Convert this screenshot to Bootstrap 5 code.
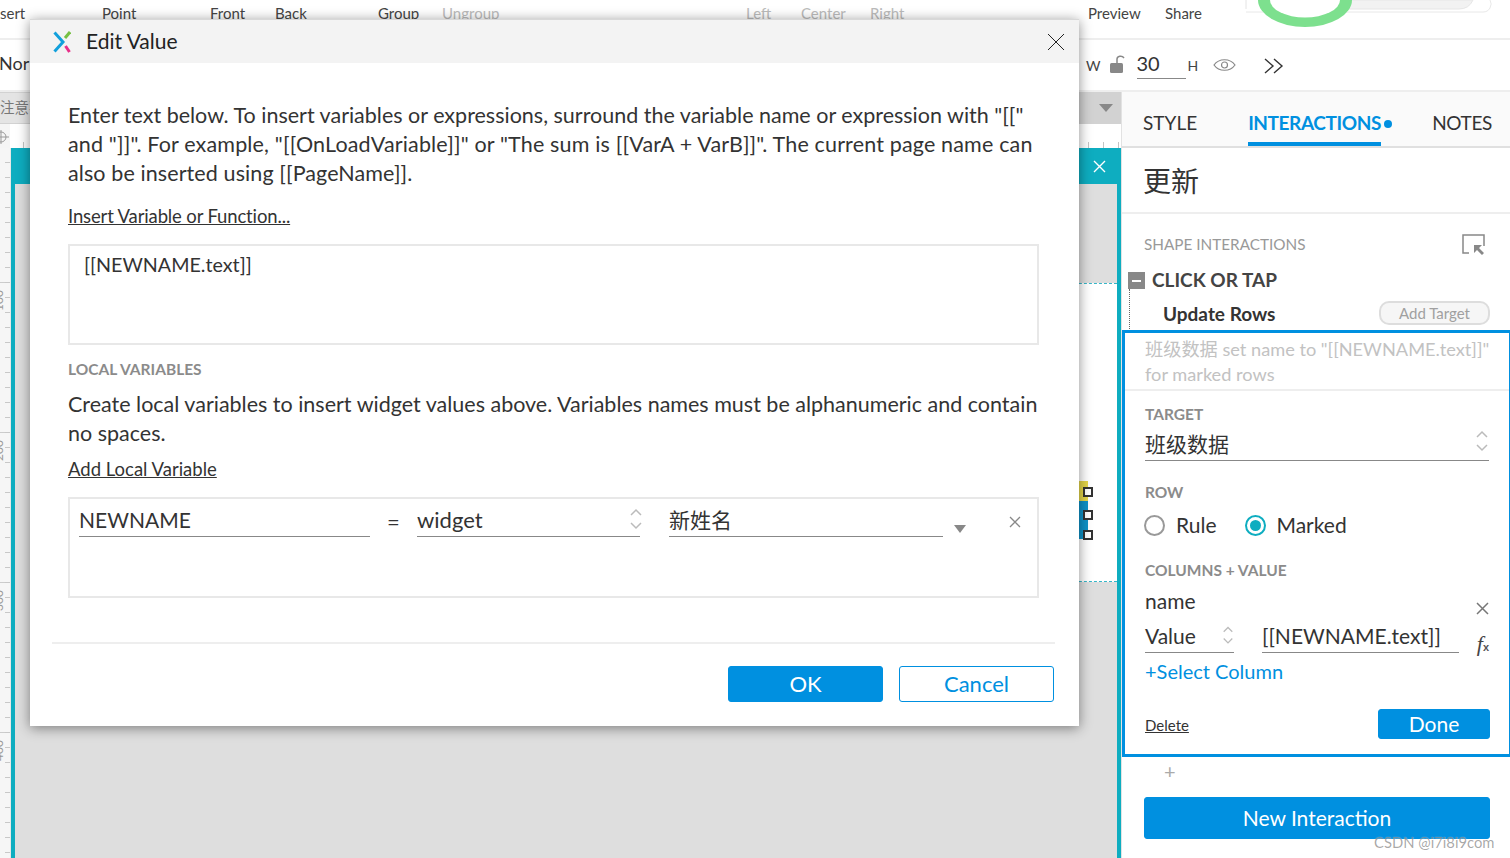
<!doctype html>
<html lang="en"><head><meta charset="utf-8"><title>Edit Value</title>
<link rel="stylesheet" href="https://cdn.jsdelivr.net/npm/bootstrap@5.3.0/dist/css/bootstrap.min.css">
<style>
:root{--ax:#0090e0;--tl:#0eadc0}
html,body{height:858px;overflow:hidden}
body{font-family:Lato,"Noto Sans CJK SC",sans-serif;color:#333;background:#fff;position:relative}
.shell{width:1510px;height:858px}
.tb-one{height:40px;border-bottom:2px solid #eee;display:grid;grid-template-columns:102px 108px 65px 103px 64px 304px 55px 69px 218px 77px 1fr;font-size:15px;line-height:27px;overflow:hidden;position:relative;color:#444}
.tb-one span{display:block}
.tb-one .dim{color:#bbb}
.ring{position:absolute;left:1245px;top:0}
.tb-two{height:52px;border-bottom:2px solid #eee;position:relative;font-size:18px}
.tb-two .norm{width:1087px;line-height:46px;margin-left:-1px}
.tb-two .lbl{font-size:14px;color:#444;margin-top:15px}
.lockic{margin:13px 0 0 8px}
.wval{width:49px;margin-left:10px;border-bottom:1px solid #888;font-size:20px;height:39px;line-height:47px}
.hval{margin-left:2px}
.eyeic{margin:18px 0 0 15px}
.chevic{margin:18px 0 0 28px}
.leftcol{width:1121px}
.rightcol{width:389px;border-left:1px solid #e2e2e2;position:relative}
.tabstrip{height:32px;background:#d2d2d2;font-size:14.5px;color:#777;position:relative}
.tabstrip .pg{background:#e4e4e4;width:30px;line-height:30px;white-space:nowrap;overflow:hidden}
.tri-b{width:0;height:0;border-left:7px solid transparent;border-right:7px solid transparent;border-top:8px solid #888;margin-right:8px}
.hruler{height:24px;background-image:repeating-linear-gradient(90deg,#c4c4c4 0 1px,transparent 1px 15px);background-size:100% 6px;background-repeat:no-repeat;background-position:8px 100%;background-color:#fff}
.hcorner{width:10px;height:24px;background:#f5f5f5}
.stage{height:710px}
.vruler{width:11px;flex:none;background-color:#f6f6f6;background-image:repeating-linear-gradient(180deg,#c8c8c8 0 1px,transparent 1px 15px),repeating-linear-gradient(180deg,#ccc 0 1px,transparent 1px 150px);background-size:5px 100%,100% 100%;background-repeat:no-repeat;background-position:100% 14px,0 134px;overflow:hidden;padding-top:134px;border-right:1px solid #e8e8e8}
.vruler div{height:150px;width:16px;font-size:12px;color:#999;writing-mode:vertical-rl;transform:translateX(-8px) rotate(180deg);line-height:14px;text-align:right;padding-bottom:8px}
.frame{width:1110px;border-left:4px solid var(--tl);border-right:4px solid var(--tl)}
.framehead{height:36px;background:var(--tl);color:#fff;padding-right:11px}
.canvasarea{height:674px;background:#dedede;padding-top:99px;position:relative}
.artboard{width:700px;height:299px;background:#fff;border-top:1px dashed #37b6c8;border-bottom:1px dashed #37b6c8;position:relative}
.hand{position:absolute;width:10px;height:10px;background:#fff;border:2px solid #333;left:calc(100% - 34px)}
.colorbar{position:absolute;left:calc(100% - 38px);width:9px}
/* right panel */
.rtabs{height:56px;background:#fafafa;border-bottom:2px solid #e0e0e0;font-size:19px;position:relative;padding-left:21px}
.rtabs span{line-height:62px;display:block}
.tab-on{color:var(--ax);font-weight:700;border-bottom:4px solid var(--ax);height:54px;margin-left:51px;letter-spacing:-.4px}
.tab-dot{width:8px;height:8px;border-radius:50%;background:var(--ax);margin:28px 0 0 3px}
.tab-note{margin-left:auto;margin-right:18px;letter-spacing:-.35px}
.rtitle{height:66px;border-bottom:2px solid #eee;font-size:28px;line-height:66px;padding-left:21px}
.capt{font-size:15.5px;color:#8b8b8b;font-weight:700;line-height:20px}
.sect-a{height:49px;padding:11px 25px 0 22px}
.sect-a .capt{color:#999;font-weight:400;font-size:15.3px}
.clickrow{height:34px;padding-left:6px;font-size:19px;font-weight:700;color:#444;line-height:32px}
.minus{width:17px;height:17px;background:#888;margin-right:7px;position:relative}
.minus::after{content:"";position:absolute;left:4px;top:8px;width:9px;height:2px;background:#fff}
.updrow{height:33px;padding:0 20px 0 41px;font-weight:700;font-size:19px;position:relative;line-height:32px}
.updrow::before{content:"";position:absolute;left:7px;top:-8px;height:40px;border-left:1px dotted #666}
.addt{width:111px;height:24px;border:2px solid #ddd;border-radius:10px;background:#f6f6f6;color:#a0a0a0;font-size:15px;font-weight:400;line-height:20px;padding:0;margin-top:-1px}
.editbox{height:427px;border:3px solid var(--ax);border-right-width:1px}
.ghost{height:58px;border-bottom:2px solid #eee;color:#c2c2c2;font-size:18.2px;line-height:25px;padding:4px 0 0 20px;white-space:nowrap}
.edpad{padding:0 20px}
.uline{border-bottom:1px solid #888}
.fs20{font-size:21px}
.rdo{width:21px;height:21px;border-radius:50%;border:2px solid #999;background:#fff;position:relative}
.rdo-on{border-color:var(--tl)}
.rdo-on::after{content:"";position:absolute;left:3px;top:3px;width:11px;height:11px;border-radius:50%;background:var(--tl)}
.rlabel{margin-left:11px}.rlabel-m{margin-left:10px}
.bluebtn{background:var(--ax);border:1px solid var(--ax);color:#fff;border-radius:3px;padding:0}
.bluebtn:hover{background:var(--ax);color:#fff}
.outbtn{background:#fff;border:1px solid var(--ax);color:var(--ax);border-radius:3px;padding:0}
.done{width:112px;height:30px;font-size:21px;line-height:26px;margin-right:-1px}
.newint{width:346px;height:42px;font-size:21px;margin:0 0 0 22px}
.plus{height:40px;padding-left:42px;color:#aaa;font-size:20px;line-height:28px}
.dlk{color:#333;font-size:15px;margin-bottom:3px}
.clr{color:var(--ax)}
.fxmark{font-family:"Liberation Serif",serif;font-style:italic;font-size:22px;color:#444;margin-top:6px;line-height:34px;white-space:nowrap}
.fxmark b{font:700 11px "Liberation Sans",sans-serif;color:#555}
.wm{position:absolute;left:252px;top:740px;font-size:14.8px;line-height:20px;color:rgba(60,60,60,.45);white-space:nowrap;text-shadow:0 0 1px rgba(255,255,255,.7)}
/* dialog */
.dlg{position:absolute;left:30px;top:19px;width:1049px;height:707px;background:#fff;box-shadow:0 2px 12px rgba(0,0,0,.45);border-top:1px solid #d8d8d8}
.dlghead{height:43px;background:#f3f3f3;font-size:21px;line-height:40px;color:#222;padding:0 14px 0 23px}
.dlghead .ttl{margin-left:15px;margin-bottom:2px}
.dlgbody{padding:38px 40px 0 38px}
.para{font-size:21.5px;line-height:29px;margin:0;white-space:nowrap;color:#333}
.ls-a{letter-spacing:.16px}.ls-b{letter-spacing:.1px}
.dlnk{font-size:18.5px;line-height:24px;color:#333;text-decoration:underline;display:block}
.dlnk-t{letter-spacing:-.14px;margin-top:16px}
.boxa{height:101px;border:2px solid #e8e8e8;padding:5px 14px;font-size:19.7px;line-height:28px;margin-top:16px}
.loc-h{margin-top:14px}.loc-p{margin-top:11px}.loc-l{margin-top:9px}
.boxb{height:101px;border:2px solid #e8e8e8;margin-top:16px;padding:9px 0 0 9px;position:relative;font-size:21px}
.fld{line-height:24px;border-bottom:1px solid #888;height:29px}
.f-a{width:291px}.f-b{width:223px;margin-left:47px;font-size:22px}.f-c{width:274px;margin-left:29px}
.f-b svg{margin-right:-3px}
.eq{width:47px;text-align:center;font-size:22px;line-height:28px;margin-right:-47px}
.tri-s{margin:17px 0 0 11px;border-left-width:6px;border-right-width:6px}
.xic{margin:7px 0 0 42px}
.sep{height:2px;background:#eee;margin:44px -16px 0 -16px}
.footbtns{margin:22px -15px 0 0}
.dbtn{width:155px;height:36px;font-size:22px;line-height:32px}
.gapa{margin-top:13px}.gapb{height:35px;line-height:36px;margin-top:2px}.gapc{margin-top:21px}.gapd{height:32px;margin-top:7px;margin-left:-1px}
.gape{margin-top:19px}.gapf{height:32px;line-height:32px;margin-top:5px}.gapg{height:32px;line-height:30px;margin-top:4px}
.gaph{font-size:20px;line-height:28px;margin-top:4px}.gapi{margin-top:24px}
.rd2{margin-left:29px}.vf{width:89px}.nf{width:197px;margin-left:28px}
.xname{margin-top:16px}
</style></head>
<body>
<div class="shell d-flex flex-column">
  <div class="tb-one">
    <span>sert</span><span>Point</span><span>Front</span><span>Back</span><span>Group</span><span class="dim">Ungroup</span><span class="dim">Left</span><span class="dim">Center</span><span class="dim">Right</span><span>Preview</span><span>Share</span>
    <svg class="ring" width="265" height="30" viewBox="0 0 265 30"><path d="M1 0V9" stroke="#e4e4e4" fill="none"/><path d="M1 12H238a8 8 0 0 0 7-12" stroke="#e8e8e8" fill="none"/><path d="M90 0H228q-4 9-14 9H90z" fill="#f2f2f2" stroke="#e6e6e6"/><path d="M13 0a47 27 0 0 0 94 0z" fill="#7de08e"/><path d="M25 0a35 17.500 0 0 0 70 0z" fill="#fff"/></svg>
  </div>
  <div class="tb-two d-flex align-items-start">
    <div class="norm">Nor</div>
    <span class="lbl">W</span>
    <svg class="lockic" width="18" height="24" viewBox="0 0 18 24"><rect x="1" y="10" width="13" height="10" rx="1.500" fill="#888"/><path d="M8 10V6c0-3 5-4 7-1" fill="none" stroke="#888" stroke-width="1.500"/></svg>
    <div class="wval">30</div>
    <span class="lbl hval">H</span>
    <svg class="eyeic" width="23" height="14" viewBox="0 0 23 14"><path d="M1 7C6 0 17 0 22 7 17 14 6 14 1 7z" fill="none" stroke="#888" stroke-width="1.200"/><circle cx="11.500" cy="7" r="3" fill="none" stroke="#888" stroke-width="1.200"/></svg>
    <svg class="chevic" width="20" height="16" viewBox="0 0 20 16"><path d="M1 1l8 7-8 7M10 1l8 7-8 7" fill="none" stroke="#333" stroke-width="1.400"/></svg>
  </div>
  <div class="d-flex flex-grow-1">
    <div class="leftcol d-flex flex-column">
      <div class="tabstrip d-flex justify-content-between align-items-center"><div class="pg">注意事项</div><div class="tri-b"></div></div>
      <div class="hruler d-flex"><div class="hcorner"><svg width="10" height="24" viewBox="0 0 10 24"><circle cx="1" cy="11" r="5" fill="none" stroke="#999"/><path d="M0 11H9M1 4V18" stroke="#999"/></svg></div></div>
      <div class="stage d-flex">
        <div class="vruler"><div>100</div><div>200</div><div>300</div><div>400</div></div>
        <div class="frame">
          <div class="framehead d-flex justify-content-end align-items-center"><svg width="13" height="13" viewBox="0 0 13 13"><path d="M1 1l11 11M12 1L1 12" stroke="#fff" stroke-width="1.400"/></svg></div>
          <div class="canvasarea d-flex justify-content-end">
            <div class="artboard">
              <i class="colorbar" style="top:197px;height:20px;background:#e5d64a"></i>
              <i class="colorbar" style="top:217px;height:38px;background:#0e92c8"></i>
              <i class="hand" style="top:203px"></i><i class="hand" style="top:226px"></i><i class="hand" style="top:246px"></i>
            </div>
          </div>
        </div>
      </div>
    </div>
    <div class="rightcol d-flex flex-column">
      <div class="rtabs d-flex"><span>STYLE</span><span class="tab-on">INTERACTIONS</span><i class="tab-dot"></i><span class="tab-note">NOTES</span></div>
      <div class="rtitle">更新</div>
      <div class="sect-a d-flex justify-content-between align-items-center"><span class="capt">SHAPE INTERACTIONS</span>
        <svg width="23" height="21" viewBox="0 0 23 21"><path d="M7 19H1V1H22V12" fill="none" stroke="#888" stroke-width="1.500"/><path d="M12 11h8l-3 3 5 5-2 2-5-5-3 3z" fill="#888"/></svg></div>
      <div class="clickrow d-flex align-items-center"><i class="minus"></i>CLICK OR TAP</div>
      <div class="updrow d-flex justify-content-between align-items-center"><span>Update Rows</span><button type="button" class="btn addt">Add Target</button></div>
      <div class="editbox">
        <div class="ghost">班级数据 set name to "[[NEWNAME.text]]"<br>for marked rows</div>
        <div class="edpad">
          <div class="capt gapa">TARGET</div>
          <div class="d-flex justify-content-between uline fs20 gapb">班级数据<svg class="mt-1" width="14" height="24" viewBox="0 0 14 24"><path d="M2 7l5-5 5 5M2 15l5 5 5-5" fill="none" stroke="#bbb" stroke-width="1.500"/></svg></div>
          <div class="capt gapc">ROW</div>
          <div class="d-flex align-items-center fs20 gapd"><i class="rdo"></i><span class="rlabel">Rule</span><i class="rdo rdo-on rd2"></i><span class="rlabel-m">Marked</span></div>
          <div class="capt gape">COLUMNS + VALUE</div>
          <div class="d-flex justify-content-between fs20 gapf">name<svg class="xname" width="14" height="24" viewBox="0 0 14 24"><path d="M2 2l11 11M13 2L2 13" stroke="#777" stroke-width="1.500"/></svg></div>
          <div class="d-flex fs20 gapg">
            <div class="uline d-flex justify-content-between vf">Value<svg class="mt-1" width="12" height="22" viewBox="0 0 14 24"><path d="M2 7l5-5 5 5M2 15l5 5 5-5" fill="none" stroke="#bbb" stroke-width="1.500"/></svg></div>
            <div class="uline nf">[[NEWNAME.text]]</div>
            <div class="fxmark ms-auto">f<b>x</b></div>
          </div>
          <div class="clr gaph">+Select Column</div>
          <div class="d-flex justify-content-between align-items-end gapi"><a class="dlk" href="#">Delete</a><button type="button" class="btn bluebtn done">Done</button></div>
        </div>
      </div>
      <div class="plus">+</div>
      <button type="button" class="btn bluebtn newint">New Interaction</button>
      <div class="wm">CSDN @i7i8i9com</div>
    </div>
  </div>
</div>
<div class="dlg">
  <div class="dlghead d-flex align-items-center">
    <svg width="18" height="22" viewBox="0 0 18 22"><path d="M1.500 1.500L10 11 1.500 20.500" fill="none" stroke="#12a0dc" stroke-width="3"/><path d="M17 1l-5 6" stroke="#76c043" stroke-width="3"/><path d="M12.500 15l4 6" stroke="#e8308a" stroke-width="3"/></svg>
    <span class="ttl">Edit Value</span>
    <svg class="ms-auto" width="18" height="18" viewBox="0 0 18 18"><path d="M1 1l16 16M17 1L1 17" stroke="#222" stroke-width="1"/></svg>
  </div>
  <div class="dlgbody">
    <p class="para">Enter text below. To insert variables or expressions, surround the variable name or expression with "[["<br><span class="ls-a">and "]]". For example, "[[OnLoadVariable]]" or "The sum is [[VarA + VarB]]". The current page name can</span><br><span class="ls-b">also be inserted using [[PageName]].</span></p>
    <a class="dlnk dlnk-t" href="#">Insert Variable or Function...</a>
    <div class="boxa">[[NEWNAME.text]]</div>
    <div class="capt loc-h">LOCAL VARIABLES</div>
    <p class="para loc-p">Create local variables to insert widget values above. Variables names must be alphanumeric and contain<br>no spaces.</p>
    <a class="dlnk loc-l" href="#">Add Local Variable</a>
    <div class="boxb d-flex align-items-start">
      <div class="fld f-a">NEWNAME</div><div class="eq">=</div>
      <div class="fld f-b d-flex justify-content-between">widget<svg width="14" height="24" viewBox="0 0 14 24"><path d="M2 7l5-5 5 5M2 15l5 5 5-5" fill="none" stroke="#bbb" stroke-width="1.500"/></svg></div>
      <div class="fld f-c">新姓名</div>
      <div class="tri-b tri-s"></div>
      <svg class="xic" width="14" height="14" viewBox="0 0 14 14"><path d="M2 2l10 10M12 2L2 12" stroke="#888" stroke-width="1.300"/></svg>
    </div>
    <div class="sep"></div>
    <div class="d-flex justify-content-end gap-3 footbtns">
      <button type="button" class="btn bluebtn dbtn">OK</button>
      <button type="button" class="btn outbtn dbtn">Cancel</button>
    </div>
  </div>
</div>
<script src="https://cdn.jsdelivr.net/npm/bootstrap@5.3.0/dist/js/bootstrap.bundle.min.js"></script>
</body></html>
